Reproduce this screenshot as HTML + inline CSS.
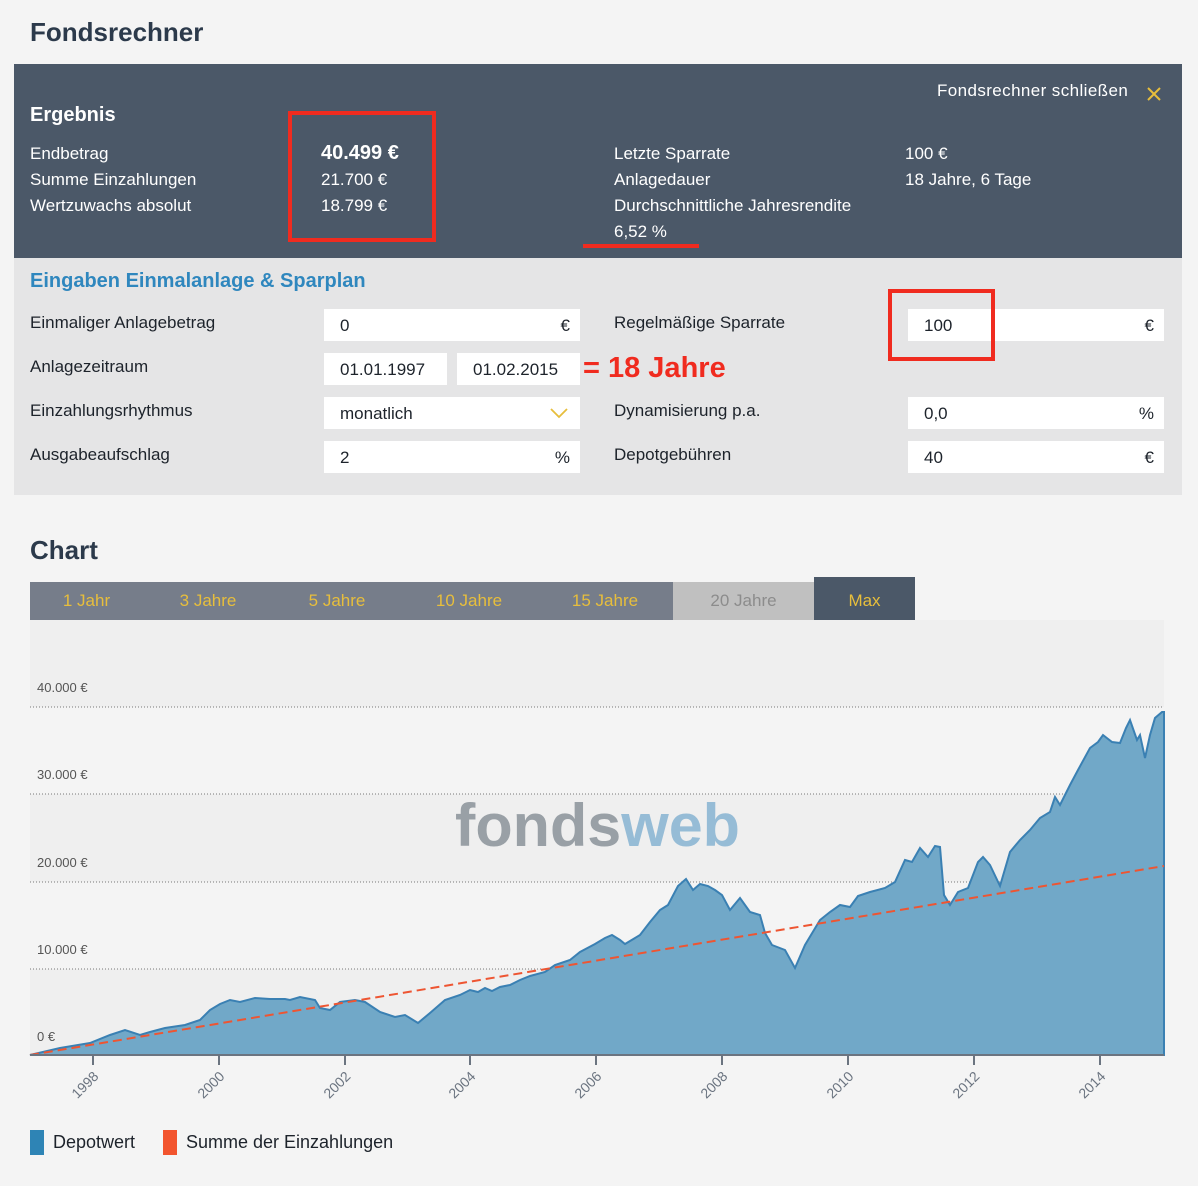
<!DOCTYPE html>
<html><head><meta charset="utf-8"><style>
*{margin:0;padding:0;box-sizing:border-box}
body{width:1198px;height:1186px;background:#f4f4f4;font-family:"Liberation Sans",sans-serif;position:relative;overflow:hidden;color:#1d232b}
.a{position:absolute;white-space:nowrap}
.w{color:#fff;font-size:17px}
.l{font-size:17px;color:#1d232b}
.in{position:absolute;background:#fff;height:32px;font-size:17px;padding:7px 16px;color:#1d232b}
.u{position:absolute;right:10px;top:7px}
.tab{position:absolute;top:582px;height:38px;color:#e7be3c;font-size:17px;text-align:center;line-height:38px}
.yl{position:absolute;font-size:13px;color:#555}
.xl{position:absolute;font-size:14px;color:#6b7480;transform:rotate(-45deg);transform-origin:right top}
</style></head><body>
<div class="a" style="left:30px;top:17px;font-size:26px;font-weight:bold;color:#2c3a4b">Fondsrechner</div>

<div class="a" style="left:14px;top:64px;width:1168px;height:194px;background:#4b5868"></div>
<div class="a w" style="left:937px;top:81px;letter-spacing:0.4px">Fondsrechner schließen</div>
<svg class="a" style="left:1146px;top:86px" width="16" height="16"><path d="M2,2 L14,14 M14,2 L2,14" stroke="#e7be3c" stroke-width="2"/></svg>
<div class="a w" style="left:30px;top:104px;font-size:20px;font-weight:bold">Ergebnis</div>
<div class="a w" style="left:30px;top:144px">Endbetrag</div>
<div class="a w" style="left:30px;top:170px">Summe Einzahlungen</div>
<div class="a w" style="left:30px;top:196px">Wertzuwachs absolut</div>
<div class="a w" style="left:321px;top:142px;font-size:20px;font-weight:bold">40.499 €</div>
<div class="a w" style="left:321px;top:170px">21.700 €</div>
<div class="a w" style="left:321px;top:196px">18.799 €</div>
<div class="a" style="left:288px;top:111px;width:148px;height:131px;border:4px solid #f02b1f"></div>
<div class="a w" style="left:614px;top:144px">Letzte Sparrate</div>
<div class="a w" style="left:614px;top:170px">Anlagedauer</div>
<div class="a w" style="left:614px;top:196px">Durchschnittliche Jahresrendite</div>
<div class="a w" style="left:614px;top:222px">6,52 %</div>
<div class="a" style="left:583px;top:244px;width:116px;height:4px;background:#f02b1f"></div>
<div class="a w" style="left:905px;top:144px">100 €</div>
<div class="a w" style="left:905px;top:170px">18 Jahre, 6 Tage</div>

<div class="a" style="left:14px;top:258px;width:1168px;height:237px;background:#e5e5e6"></div>
<div class="a" style="left:30px;top:270px;font-size:20px;font-weight:bold;color:#2f87be">Eingaben Einmalanlage &amp; Sparplan</div>
<div class="a l" style="left:30px;top:313px">Einmaliger Anlagebetrag</div>
<div class="a l" style="left:30px;top:357px">Anlagezeitraum</div>
<div class="a l" style="left:30px;top:401px">Einzahlungsrhythmus</div>
<div class="a l" style="left:30px;top:445px">Ausgabeaufschlag</div>
<div class="in" style="left:324px;top:309px;width:256px">0<span class="u">€</span></div>
<div class="in" style="left:324px;top:353px;width:123px">01.01.1997</div>
<div class="in" style="left:457px;top:353px;width:123px">01.02.2015</div>
<div class="a" style="left:583px;top:352px;font-size:29px;font-weight:bold;color:#f02b1f">= 18 Jahre</div>
<div class="in" style="left:324px;top:397px;width:256px">monatlich<svg class="a" style="right:12px;top:10px" width="18" height="12"><path d="M1,2 L9,10 L17,2" stroke="#e7be3c" stroke-width="1.8" fill="none"/></svg></div>
<div class="in" style="left:324px;top:441px;width:256px">2<span class="u">%</span></div>
<div class="a l" style="left:614px;top:313px">Regelmäßige Sparrate</div>
<div class="a l" style="left:614px;top:401px">Dynamisierung p.a.</div>
<div class="a l" style="left:614px;top:445px">Depotgebühren</div>
<div class="in" style="left:908px;top:309px;width:256px">100<span class="u">€</span></div>
<div class="in" style="left:908px;top:397px;width:256px">0,0<span class="u">%</span></div>
<div class="in" style="left:908px;top:441px;width:256px">40<span class="u">€</span></div>
<div class="a" style="left:888px;top:289px;width:107px;height:72px;border:4px solid #f02b1f"></div>

<div class="a" style="left:30px;top:535px;font-size:26px;font-weight:bold;color:#2c3a4b">Chart</div>
<div class="a" style="left:30px;top:582px;width:643px;height:38px;background:#767d8a"></div>
<div class="tab" style="left:30px;width:113px">1 Jahr</div>
<div class="tab" style="left:143px;width:130px">3 Jahre</div>
<div class="tab" style="left:273px;width:128px">5 Jahre</div>
<div class="tab" style="left:401px;width:136px">10 Jahre</div>
<div class="tab" style="left:537px;width:136px">15 Jahre</div>
<div class="tab" style="left:673px;width:141px;background:#c0c0c0;color:#8c8c8c">20 Jahre</div>
<div class="tab" style="left:814px;top:577px;height:43px;line-height:48px;width:101px;background:#4b5868">Max</div>

<svg class="a" style="left:0;top:620px" width="1198" height="450" viewBox="0 620 1198 450">
<rect x="30" y="620" width="1134" height="87" fill="#efefef"/>
<rect x="30" y="794" width="1134" height="88" fill="#efefef"/>
<rect x="30" y="969" width="1134" height="86" fill="#efefef"/>
<g stroke="#777" stroke-dasharray="1,2" stroke-width="1"><line x1="30" x2="1164" y1="707" y2="707"/><line x1="30" x2="1164" y1="794" y2="794"/><line x1="30" x2="1164" y1="882" y2="882"/><line x1="30" x2="1164" y1="969" y2="969"/></g>
<text x="455" y="846" font-family="Liberation Sans,sans-serif" font-weight="bold" font-size="60" fill="#99a0a6" textLength="285" lengthAdjust="spacingAndGlyphs">fonds<tspan fill="#96bcd6">web</tspan></text>
<path d="M30,1055 L60,1048 90,1043 110,1035 125,1030 140,1035 150,1032 165,1028 185,1025 200,1020 210,1010 220,1004 230,1000 240,1002 255,998 270,999 285,999 290,1000 300,997 315,1000 320,1008 330,1010 340,1002 355,1000 365,1002 380,1012 395,1017 405,1015 418,1023 430,1013 445,1000 460,995 470,990 478,992 485,988 492,991 500,987 510,985 520,980 530,976 545,972 555,965 570,960 580,952 595,944 605,938 612,935 620,940 625,944 640,935 650,922 660,910 668,905 678,886 686,879 693,890 700,884 708,886 715,890 722,895 730,910 740,898 750,912 760,915 765,933 772,945 785,950 795,968 805,945 820,920 830,912 840,905 850,907 858,896 870,892 885,888 895,882 905,860 912,862 920,848 928,857 935,846 940,847 944,895 950,905 958,892 968,888 978,862 983,857 990,865 1000,886 1010,852 1020,840 1030,830 1040,818 1050,812 1055,797 1060,805 1070,785 1078,770 1090,748 1098,742 1103,735 1112,742 1120,743 1126,728 1130,720 1137,740 1140,735 1145,758 1150,735 1155,718 1162,712 1164,712 L1164,1055 Z" fill="#71a8c8" stroke="#3a80b3" stroke-width="2"/>
<line x1="30" y1="1055" x2="1164" y2="866" stroke="#ee5532" stroke-width="2" stroke-dasharray="9,5"/>
<line x1="30" y1="1055" x2="1164" y2="1055" stroke="#6b7480" stroke-width="2"/>
<g stroke="#6b7480" stroke-width="2"><line x1="93" x2="93" y1="1055" y2="1065"/><line x1="219" x2="219" y1="1055" y2="1065"/><line x1="345" x2="345" y1="1055" y2="1065"/><line x1="470" x2="470" y1="1055" y2="1065"/><line x1="596" x2="596" y1="1055" y2="1065"/><line x1="722" x2="722" y1="1055" y2="1065"/><line x1="848" x2="848" y1="1055" y2="1065"/><line x1="974" x2="974" y1="1055" y2="1065"/><line x1="1100" x2="1100" y1="1055" y2="1065"/></g>
</svg>
<div class="yl" style="left:37px;top:680px">40.000 €</div>
<div class="yl" style="left:37px;top:767px">30.000 €</div>
<div class="yl" style="left:37px;top:855px">20.000 €</div>
<div class="yl" style="left:37px;top:942px">10.000 €</div>
<div class="yl" style="left:37px;top:1029px">0 €</div>
<div class="xl" style="left:59px;top:1068px">1998</div>
<div class="xl" style="left:185px;top:1068px">2000</div>
<div class="xl" style="left:311px;top:1068px">2002</div>
<div class="xl" style="left:436px;top:1068px">2004</div>
<div class="xl" style="left:562px;top:1068px">2006</div>
<div class="xl" style="left:688px;top:1068px">2008</div>
<div class="xl" style="left:814px;top:1068px">2010</div>
<div class="xl" style="left:940px;top:1068px">2012</div>
<div class="xl" style="left:1066px;top:1068px">2014</div>

<div class="a" style="left:30px;top:1130px;width:14px;height:25px;background:#2e84b5"></div>
<div class="a l" style="left:53px;top:1132px;font-size:18px">Depotwert</div>
<div class="a" style="left:163px;top:1130px;width:14px;height:25px;background:#f2542e"></div>
<div class="a l" style="left:186px;top:1132px;font-size:18px">Summe der Einzahlungen</div>
</body></html>
